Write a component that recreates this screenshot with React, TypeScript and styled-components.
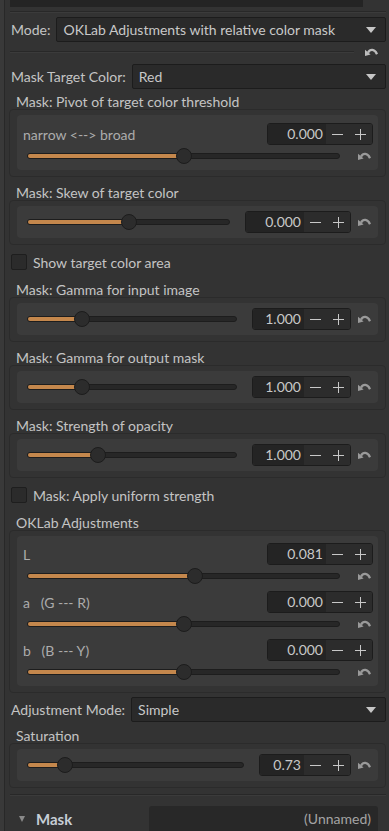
import React from 'react';
import styled, { createGlobalStyle } from 'styled-components';

const GlobalStyle = createGlobalStyle`
  html, body {
    margin: 0;
    padding: 0;
    background: #333333;
  }
  body {
    font-family: Lato, "Noto Sans", sans-serif;
    font-size: 14px;
    color: #c4c4c4;
  }
`;

const Page = styled.div`
  width: 389px;
  height: 831px;
  display: flex;
  overflow: hidden;
  background: #333333;
`;

const Rail = styled.div`
  width: 4px;
  flex-shrink: 0;
  background: #393939;
  border-right: 1px solid #282828;
`;

const Content = styled.div`
  flex: 1;
  display: flex;
  flex-direction: column;
  padding: 0 3px 0 4px;
  min-width: 0;

  & > * {
    flex-shrink: 0;
  }
`;

const TopBar = styled.div`
  margin-left: 1px;
  width: 353px;
  height: 7px;
  background: #242424;
`;

const Separator = styled.div<{ $top: number }>`
  margin-top: ${(p) => p.$top}px;
  margin-left: 1px;
  border-top: 1px solid #282828;
  border-bottom: 1px solid #3b3b3b;
`;

const ResetLine = styled.div`
  display: flex;
  align-items: center;
  height: 14px;
  margin-top: 3px;
  padding-right: 8px;
`;

const ResetLineRule = styled.div`
  flex: 1;
  margin-left: 1px;
  border-top: 1px solid #282828;
  border-bottom: 1px solid #3b3b3b;
`;

const ComboRow = styled.div<{ $top: number }>`
  display: flex;
  align-items: center;
  height: 25px;
  margin-top: ${(p) => p.$top}px;
  padding-left: 2px;
`;

const ComboLabel = styled.span`
  margin-right: 6px;
  white-space: nowrap;
`;

const Combo = styled.div`
  flex: 1;
  height: 25px;
  box-sizing: border-box;
  display: flex;
  align-items: center;
  justify-content: space-between;
  padding: 0 9px 0 6px;
  background: #2a2a2a;
  border: 1px solid #1c1c1c;
  border-radius: 2px;
  color: #c8c8c8;
  white-space: nowrap;
`;

const Group = styled.div<{ $top: number }>`
  margin-top: ${(p) => p.$top}px;
  display: flex;
  flex-direction: column;
`;

const GroupTitle = styled.div`
  height: 15px;
  line-height: 15px;
  padding-left: 7px;
  white-space: nowrap;
`;

const Frame = styled.div`
  border: 1px solid #2b2b2b;
  border-radius: 4px;
  padding: 5px 7px 6px 7px;
`;

const Panel = styled.div`
  background: #3b3b3b;
  border-radius: 4px;
`;

const SingleRow = styled(Panel)`
  height: 32px;
  display: flex;
  align-items: center;
  padding: 0 7px 0 10px;
`;

const StackPanel = styled(Panel)<{ $top: number }>`
  display: flex;
  flex-direction: column;
  padding: ${(p) => p.$top}px 5px 6px 6px;
`;

const Block = styled.div<{ $first?: boolean }>`
  margin-top: ${(p) => (p.$first ? 0 : 7)}px;
`;

const SpinRow = styled.div`
  height: 22px;
  display: flex;
  align-items: center;
  justify-content: space-between;
`;

const RowLabel = styled.span`
  color: #acacac;
  white-space: pre;
`;

const SliderRow = styled.div`
  margin-top: 3px;
  height: 16px;
  display: flex;
  align-items: center;
  padding-left: 4px;
  padding-right: 2px;
`;

const Track = styled.div`
  position: relative;
  flex: 1;
  height: 16px;
`;

const TrackLine = styled.div`
  position: absolute;
  left: 0;
  right: 0;
  top: 5px;
  height: 6px;
  box-sizing: border-box;
  background: #272727;
  border: 1px solid #1d1d1d;
  border-radius: 3px;
  overflow: hidden;
`;

const TrackFill = styled.div`
  height: 100%;
  background: #c4874c;
`;

const Handle = styled.div`
  position: absolute;
  top: 0;
  width: 16px;
  height: 16px;
  box-sizing: border-box;
  border-radius: 50%;
  background: #2c2c2c;
  border: 1px solid #1c1c1c;
`;

const Spin = styled.div<{ $gap?: number }>`
  display: flex;
  height: 22px;
  box-sizing: border-box;
  margin-left: ${(p) => p.$gap || 0}px;
  border: 1px solid #1c1c1c;
  border-radius: 3px;
  overflow: hidden;
  flex-shrink: 0;
`;

const SpinValue = styled.div<{ $w: number }>`
  width: ${(p) => p.$w}px;
  box-sizing: border-box;
  background: #242424;
  text-align: right;
  padding-right: 3px;
  line-height: 20px;
  color: #c8c8c8;
`;

const SpinButton = styled.div`
  width: 23px;
  display: flex;
  align-items: center;
  justify-content: center;
  background: #2c2c2c;
`;

const ResetWrap = styled.div<{ $gap: number }>`
  margin-left: ${(p) => p.$gap}px;
  display: flex;
  align-items: center;
  flex-shrink: 0;
`;

const CheckRow = styled.div<{ $top: number }>`
  display: flex;
  align-items: center;
  height: 16px;
  margin-top: ${(p) => p.$top}px;
  padding-left: 2px;
`;

const CheckBox = styled.div`
  width: 16px;
  height: 16px;
  box-sizing: border-box;
  background: #2b2b2b;
  border: 1px solid #1e1e1e;
  border-radius: 2px;
  margin-right: 6px;
`;

const Header = styled.div`
  display: flex;
  align-items: center;
  height: 25px;
  margin-top: 10px;
`;

const Caret = styled.div`
  margin-left: 10px;
  width: 0;
  height: 0;
  border-left: 3.5px solid transparent;
  border-right: 3.5px solid transparent;
  border-top: 6px solid #8a8a8a;
`;

const HeaderTitle = styled.span`
  margin-left: 11px;
  font-size: 15px;
  font-weight: 700;
  color: #c6ced6;
`;

const NameBox = styled.div`
  margin-left: auto;
  margin-right: 8px;
  width: 229px;
  height: 25px;
  box-sizing: border-box;
  background: #282828;
  border-radius: 3px 3px 0 0;
  display: flex;
  align-items: center;
  justify-content: flex-end;
  padding-right: 7px;
  color: #a4a4a4;
`;

const Arrow = () => (
  <svg width="10" height="6" viewBox="0 0 10 6">
    <polygon points="0,0 10,0 5,6" fill="#c6c6c6" />
  </svg>
);

// curved "reset to default" arrow, head at the lower left
const ResetIcon = ({ bright }: { bright?: boolean }) => {
  const c = bright ? '#bdbdbd' : '#9a9a9a';
  return (
    <svg width="13" height="9" viewBox="0 0 13 9">
      <path d="M3 4.6 C5 1 9.6 0.6 12 6.2" stroke={c} strokeWidth="2.2" fill="none" />
      <polygon points="0,1.8 5.6,6.6 0,8" fill={c} />
    </svg>
  );
};

const Minus = () => (
  <svg width="11" height="11" viewBox="0 0 11 11">
    <rect x="0" y="5" width="11" height="1" fill="#c8c8c8" />
  </svg>
);

const Plus = () => (
  <svg width="11" height="11" viewBox="0 0 11 11">
    <rect x="0" y="5" width="11" height="1" fill="#c8c8c8" />
    <rect x="5" y="0" width="1" height="11" fill="#c8c8c8" />
  </svg>
);

const Slider = ({ value }: { value: number }) => (
  <Track>
    <TrackLine>
      <TrackFill style={{ width: `calc(8px + (100% - 16px) * ${value})` }} />
    </TrackLine>
    <Handle style={{ left: `calc((100% - 16px) * ${value})` }} />
  </Track>
);

const SpinBox = ({ value, width, gap }: { value: string; width: number; gap?: number }) => (
  <Spin $gap={gap}>
    <SpinValue $w={width}>{value}</SpinValue>
    <SpinButton>
      <Minus />
    </SpinButton>
    <SpinButton>
      <Plus />
    </SpinButton>
  </Spin>
);

const SliderGroup = ({ title, value, pos, width, top }: { title: string; value: string; pos: number; width: number; top: number }) => (
  <Group $top={top}>
    <GroupTitle>{title}</GroupTitle>
    <Frame>
      <SingleRow>
        <Slider value={pos} />
        <SpinBox value={value} width={width} gap={15} />
        <ResetWrap $gap={7}>
          <ResetIcon />
        </ResetWrap>
      </SingleRow>
    </Frame>
  </Group>
);

const LabeledSlider = ({ label, value, pos, first }: { label: string; value: string; pos: number; first?: boolean }) => (
  <Block $first={first}>
    <SpinRow>
      <RowLabel>{label}</RowLabel>
      <SpinBox value={value} width={58} />
    </SpinRow>
    <SliderRow>
      <Slider value={pos} />
      <ResetWrap $gap={18}>
        <ResetIcon />
      </ResetWrap>
    </SliderRow>
  </Block>
);

export default function App() {
  return (
    <Page>
      <GlobalStyle />
      <Rail />
      <Content>
        <TopBar />
        <Separator $top={4} />
        <ComboRow $top={4}>
          <ComboLabel>Mode:</ComboLabel>
          <Combo>
            <span>OKLab Adjustments with relative color mask</span>
            <Arrow />
          </Combo>
        </ComboRow>
        <ResetLine>
          <ResetLineRule />
          <ResetWrap $gap={11}>
            <ResetIcon bright />
          </ResetWrap>
        </ResetLine>
        <ComboRow $top={5}>
          <ComboLabel>Mask Target Color:</ComboLabel>
          <Combo>
            <span>Red</span>
            <Arrow />
          </Combo>
        </ComboRow>

        <Group $top={5}>
          <GroupTitle>Mask: Pivot of target color threshold</GroupTitle>
          <Frame>
            <StackPanel $top={8}>
              <LabeledSlider label="narrow <--> broad" value="0.000" pos={0.5} first />
            </StackPanel>
          </Frame>
        </Group>

        <SliderGroup title="Mask: Skew of target color" value="0.000" pos={0.5} width={58} top={8} />

        <CheckRow $top={9}>
          <CheckBox />
          <span>Show target color area</span>
        </CheckRow>

        <SliderGroup title="Mask: Gamma for input image" value="1.000" pos={0.24} width={51} top={12} />
        <SliderGroup title="Mask: Gamma for output mask" value="1.000" pos={0.24} width={51} top={8} />
        <SliderGroup title="Mask: Strength of opacity" value="1.000" pos={0.327} width={51} top={8} />

        <CheckRow $top={9}>
          <CheckBox />
          <span>Mask: Apply uniform strength</span>
        </CheckRow>

        <Group $top={12}>
          <GroupTitle>OKLab Adjustments</GroupTitle>
          <Frame>
            <StackPanel $top={7}>
              <LabeledSlider label="L" value="0.081" pos={0.539} first />
              <LabeledSlider label="a   (G --- R)" value="0.000" pos={0.5} />
              <LabeledSlider label="b   (B --- Y)" value="0.000" pos={0.5} />
            </StackPanel>
          </Frame>
        </Group>

        <ComboRow $top={4}>
          <ComboLabel>Adjustment Mode:</ComboLabel>
          <Combo>
            <span>Simple</span>
            <Arrow />
          </Combo>
        </ComboRow>

        <SliderGroup title="Saturation" value="0.73" pos={0.15} width={44} top={6} />

        <Separator $top={6} />

        <Header>
          <Caret />
          <HeaderTitle>Mask</HeaderTitle>
          <NameBox>(Unnamed)</NameBox>
        </Header>
      </Content>
    </Page>
  );
}
